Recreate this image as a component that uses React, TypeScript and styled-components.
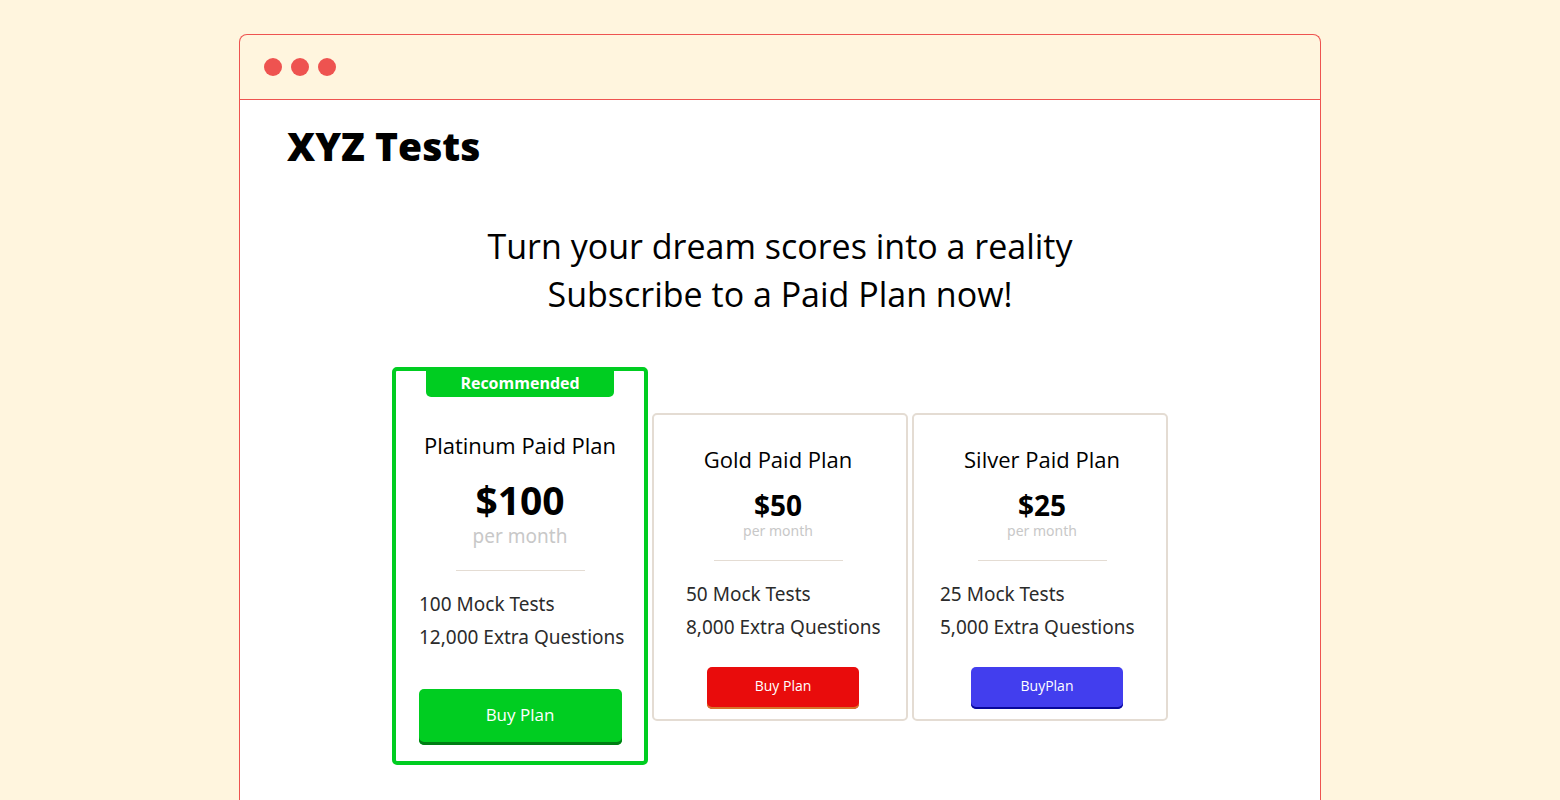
import React from "react";
import styled, { createGlobalStyle } from "styled-components";

const GlobalStyle = createGlobalStyle`
  *, *::before, *::after { box-sizing: border-box; }
  body {
    margin: 0;
    background: #fff5de;
    color: #000;
    font-family: "Open Sans", "Noto Sans", sans-serif;
  }
  h1, h2, h3, p, ul { margin: 0; padding: 0; }
`;

const Page = styled.div`
  display: flex;
  justify-content: center;
  min-height: 100vh;
  padding: 34px 16px 0;
`;

const BrowserWindow = styled.div`
  display: flex;
  flex-direction: column;
  width: 100%;
  max-width: 1082px;
  border: 1px solid #ee5350;
  border-bottom: 0;
  border-radius: 8px 8px 0 0;
  overflow: hidden;
`;

const TitleBar = styled.div`
  display: flex;
  align-items: center;
  gap: 9px;
  height: 65px;
  padding: 0 24px;
  border-bottom: 1px solid #ee5350;
`;

const Dot = styled.span`
  width: 18px;
  height: 18px;
  border-radius: 50%;
  background: #ee5350;
`;

const Content = styled.main`
  flex: 1;
  padding: 20px 16px 32px;
  background: #fff;
`;

const SiteName = styled.h1`
  padding-left: 31px;
  font-size: 39px;
  font-weight: 800;
  line-height: 52px;
`;

const Headline = styled.h2`
  margin-top: 50px;
  font-size: 34px;
  font-weight: 400;
  line-height: 48px;
  text-align: center;
`;

const Line = styled.span`
  display: block;
`;

const Plans = styled.section`
  display: flex;
  flex-wrap: wrap;
  justify-content: center;
  align-items: center;
  gap: 4px;
  margin-top: 49px;
`;

const Card = styled.article<{ $featured: boolean; $left: number; $right: number }>`
  display: flex;
  flex-direction: column;
  align-items: center;
  width: 256px;
  margin-top: ${(p) => (p.$featured ? 0 : 2)}px;
  padding: ${(p) => (p.$featured ? "0 0 16px" : "28px 0 10px")};
  padding-left: ${(p) => p.$left}px;
  padding-right: ${(p) => p.$right}px;
  border: ${(p) => (p.$featured ? "4px solid #00cd21" : "2px solid #e4dcd3")};
  border-radius: 5px;
`;

const Badge = styled.p`
  width: 188px;
  margin-bottom: 32px;
  padding-bottom: 2px;
  border-radius: 0 0 5px 5px;
  background: #00cd21;
  color: #fff;
  font-size: 16px;
  font-weight: 700;
  line-height: 24px;
  text-align: center;
`;

const PlanName = styled.h3`
  font-size: 22px;
  font-weight: 400;
  line-height: 32px;
`;

const Price = styled.p<{ $featured: boolean }>`
  margin-top: ${(p) => (p.$featured ? 15 : 14)}px;
  font-size: ${(p) => (p.$featured ? 39 : 28)}px;
  font-weight: 700;
  line-height: ${(p) => (p.$featured ? 48 : 32)}px;
`;

const Period = styled.p<{ $featured: boolean }>`
  color: #c8c8c8;
  font-family: "Noto Sans", sans-serif;
  font-size: ${(p) => (p.$featured ? 19 : 14)}px;
  line-height: ${(p) => (p.$featured ? 24 : 20)}px;
`;

const Divider = styled.hr<{ $featured: boolean }>`
  width: 129px;
  margin: ${(p) => (p.$featured ? 22 : 19)}px 0 17px;
  border: 0;
  border-top: 1px solid #e4dcd3;
`;

const Features = styled.ul<{ $inset: number }>`
  align-self: stretch;
  padding-left: ${(p) => p.$inset}px;
  color: #2b2b2b;
  font-family: "Noto Sans", sans-serif;
  font-size: 19px;
  line-height: 33px;
  list-style: none;
  white-space: nowrap;
`;

const Action = styled.div<{ $featured: boolean }>`
  margin-top: ${(p) => (p.$featured ? 35 : 23)}px;
  padding-left: ${(p) => (p.$featured ? 0 : 10)}px;
`;

const BuyButton = styled.button<{ $featured: boolean; $fill: string; $edge: string }>`
  display: block;
  width: ${(p) => (p.$featured ? 203 : 152)}px;
  height: ${(p) => (p.$featured ? 56 : 42)}px;
  padding: 0 0 6px;
  border: 0;
  border-radius: 5px;
  background: ${(p) => p.$fill};
  box-shadow: inset 0 ${(p) => (p.$featured ? -3 : -2)}px 0 ${(p) => p.$edge};
  color: #fff;
  font-family: "Open Sans", sans-serif;
  font-size: ${(p) => (p.$featured ? 17 : 14)}px;
  cursor: pointer;
`;

interface Plan {
  name: string;
  price: string;
  features: string[];
  action: string;
  fill: string;
  edge: string;
  left: number;
  right: number;
  inset: number;
  featured?: boolean;
}

const plans: Plan[] = [
  {
    name: "Platinum Paid Plan",
    price: "$100",
    features: ["100 Mock Tests", "12,000 Extra Questions"],
    action: "Buy Plan",
    fill: "#00cd21",
    edge: "#007d14",
    left: 0,
    right: 0,
    inset: 23,
    featured: true,
  },
  {
    name: "Gold Paid Plan",
    price: "$50",
    features: ["50 Mock Tests", "8,000 Extra Questions"],
    action: "Buy Plan",
    fill: "#e90c0c",
    edge: "#d9742a",
    left: 0,
    right: 4,
    inset: 32,
  },
  {
    name: "Silver Paid Plan",
    price: "$25",
    features: ["25 Mock Tests", "5,000 Extra Questions"],
    action: "BuyPlan",
    fill: "#423eee",
    edge: "#08089c",
    left: 4,
    right: 0,
    inset: 22,
  },
];

function PlanCard({ plan }: { plan: Plan }) {
  const featured = Boolean(plan.featured);
  return (
    <Card $featured={featured} $left={plan.left} $right={plan.right}>
      {featured && <Badge>Recommended</Badge>}
      <PlanName>{plan.name}</PlanName>
      <Price $featured={featured}>{plan.price}</Price>
      <Period $featured={featured}>per month</Period>
      <Divider $featured={featured} />
      <Features $inset={plan.inset}>
        {plan.features.map((feature) => (
          <li key={feature}>{feature}</li>
        ))}
      </Features>
      <Action $featured={featured}>
        <BuyButton type="button" $featured={featured} $fill={plan.fill} $edge={plan.edge}>
          {plan.action}
        </BuyButton>
      </Action>
    </Card>
  );
}

export default function App() {
  return (
    <>
      <GlobalStyle />
      <Page>
        <BrowserWindow>
          <TitleBar>
            <Dot />
            <Dot />
            <Dot />
          </TitleBar>
          <Content>
            <SiteName>XYZ Tests</SiteName>
            <Headline>
              <Line>Turn your dream scores into a reality</Line>
              <Line>Subscribe to a Paid Plan now!</Line>
            </Headline>
            <Plans>
              {plans.map((plan) => (
                <PlanCard key={plan.name} plan={plan} />
              ))}
            </Plans>
          </Content>
        </BrowserWindow>
      </Page>
    </>
  );
}
